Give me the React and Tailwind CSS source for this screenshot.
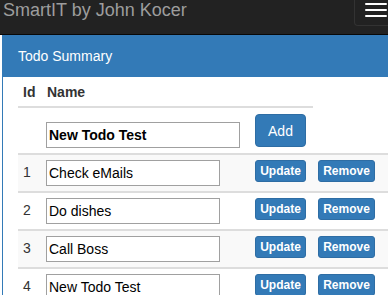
import React from 'react';

const todos = [
    {id: 1, name: 'Check eMails'},
    {id: 2, name: 'Do dishes'},
    {id: 3, name: 'Call Boss'},
    {id: 4, name: 'New Todo Test'},
];

function Navbar() {
    return (
        <div className="flex h-[35px] items-start justify-between border-b border-[#080808] bg-[#222]">
            <span className="pl-[3px] text-[18px] leading-[20px] text-[#9d9d9d]">SmartIT by John Kocer</span>
            <div className="mr-[15px] flex h-[26px] w-[44px] flex-col gap-[4px] rounded-b-[4px] border-x border-b border-[#333] pl-[10px] pt-[3px]">
                <span className="block h-[2px] w-[22px] rounded-[1px] bg-white"/>
                <span className="block h-[2px] w-[22px] rounded-[1px] bg-white"/>
                <span className="block h-[2px] w-[22px] rounded-[1px] bg-white"/>
            </div>
        </div>
    );
}

function TodoRow({todo, striped}) {
    return (
        <div className={`flex h-[38px] items-start border-t-2 border-[#ddd] ${striped ? 'bg-[#f9f9f9]' : 'bg-white'}`}>
            <div className="w-[28px] pl-[5px] pt-[7px] text-[14px] leading-[20px] text-[#333]">{todo.id}</div>
            <input
                className="mt-[5px] h-[26px] w-[174px] border border-[#a0a0a0] bg-white px-[2px] text-[14px] text-black outline-none"
                defaultValue={todo.name}
            />
            <button className="ml-[35px] mt-[5px] h-[22px] w-[51px] rounded-[3px] border border-[#2e6da4] bg-[#337ab7] text-[12px] font-bold leading-[20px] text-white">
                Update
            </button>
            <button className="ml-[12px] mt-[5px] h-[22px] w-[57px] rounded-[3px] border border-[#2e6da4] bg-[#337ab7] text-[12px] font-bold leading-[20px] text-white">
                Remove
            </button>
        </div>
    );
}

export default function App() {
    return (
        <div className="h-[295px] w-full overflow-hidden bg-white font-['Liberation_Sans',Arial,sans-serif]">
            <div className="w-[413px]">
                <Navbar/>

                <div className="ml-[2px] border border-[#337ab7]">
                    <div className="flex h-[41px] items-center bg-[#337ab7] px-[15px] text-[14px] text-white">
                        Todo Summary
                    </div>

                    <div className="pl-[15px]">
                        <div className="w-[295px]">
                            <div className="flex h-[31px] items-start border-b-2 border-[#ddd] pt-[5px] text-[14px] font-bold leading-[20px] text-[#333]">
                                <span className="w-[29px] pl-[5px]">Id</span>
                                <span>Name</span>
                            </div>
                            <div className="flex h-[45px] items-start">
                                <input
                                    className="ml-[28px] mt-[14px] h-[26px] w-[194px] border border-[#a0a0a0] bg-white px-[2px] text-[14px] font-bold text-black outline-none"
                                    defaultValue="New Todo Test"
                                />
                                <button className="ml-[15px] mt-[6px] h-[33px] w-[51px] rounded-[4px] border border-[#2e6da4] bg-[#337ab7] text-[14px] leading-[20px] text-white">
                                    Add
                                </button>
                            </div>
                        </div>

                        {todos.map((todo, i) => (
                            <TodoRow key={todo.id} todo={todo} striped={i % 2 === 0}/>
                        ))}
                    </div>
                </div>
            </div>
        </div>
    );
}
